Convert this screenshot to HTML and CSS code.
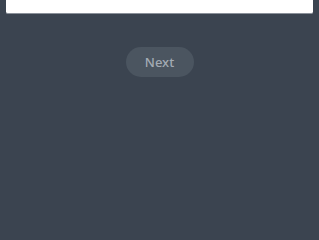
FILE: index.html
```html
<!DOCTYPE html>
<html>
<head>
    <link rel="stylesheet" href="styles.css">
</head>
<body>
    <div class="page">
        <div class="card"></div>
        <div class="actions">
            <button class="btn-next">Next</button>
        </div>
    </div>
</body>
</html>
```

FILE: styles.css
```css
/* page background */
body {
    margin: 0;
    background: #3b4450;
    font-family: "Noto Sans", "Liberation Sans", sans-serif;
}

.page {
    padding: 0 6px;
}

/* white card cut off at top */
.card {
    height: 13px;
    background: #fff;
    border-bottom: 1px solid #8a9099;
    border-radius: 0 0 2px 2px;
}

.actions {
    display: flex;
    justify-content: center;
    padding-top: 33px;
}

.btn-next {
    width: 68px;
    height: 30px;
    border: none;
    border-radius: 15px;
    background: #4b5560;
    color: #a3abb4;
    font-family: inherit;
    font-size: 13px;
    font-weight: 500;
    padding: 0;
}
```
